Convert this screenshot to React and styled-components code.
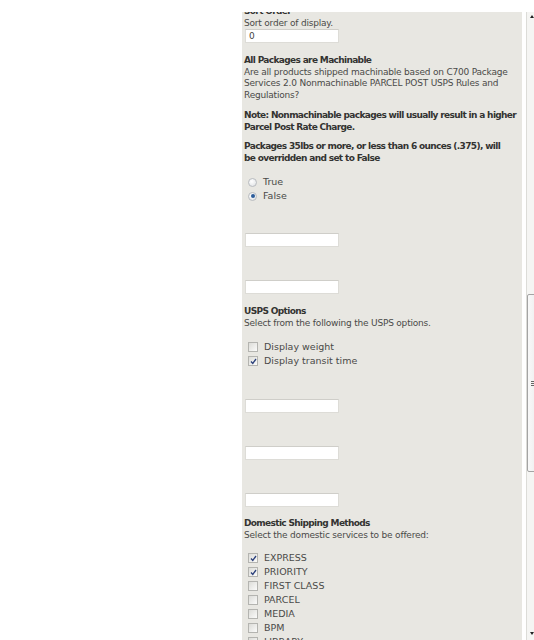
import React from 'react';
import styled, { createGlobalStyle } from 'styled-components';

const GlobalStyle = createGlobalStyle`
    html, body {
        margin: 0;
        padding: 0;
        background: #ffffff;
    }
    body {
        font-family: "DejaVu Sans", Verdana, sans-serif;
        font-size: 9px;
        color: #4a4a48;
    }
`;

const Page = styled.div`
    display: flex;
    width: 534px;
    height: 640px;
    padding-top: 12px;
    box-sizing: border-box;
    overflow: hidden;
`;

const LeftSpace = styled.div`
    width: 242px;
    flex-shrink: 0;
`;

const Panel = styled.div`
    width: 280px;
    flex-shrink: 0;
    background-color: #e8e7e2;
    overflow: hidden;
    padding-left: 2px;
    box-sizing: border-box;
`;

const Content = styled.div`
    margin-top: -6px;
    line-height: 11.5px;
`;

const Gutter = styled.div`
    width: 4px;
    flex-shrink: 0;
`;

const Scrollbar = styled.div`
    width: 17px;
    flex-shrink: 0;
    background-color: #f5f5f3;
    border-left: 1px solid #dcdcd8;
    display: flex;
    flex-direction: column;
    align-items: flex-start;
`;

const Arrow = styled.div`
    width: 0;
    height: 0;
    margin: ${p => p.$down ? 'auto 0 5px 3px' : '3px 0 0 3px'};
    border-left: 2px solid transparent;
    border-right: 2px solid transparent;
    ${p => p.$down ? 'border-top: 3px solid #222;' : 'border-bottom: 3px solid #222;'}
`;

const Thumb = styled.div`
    width: 14px;
    height: 178px;
    margin-top: ${p => p.$offset}px;
    border: 1px solid #a4a4a4;
    border-radius: 2px;
    background: linear-gradient(to right, #f8f8f8, #ebebeb);
    box-sizing: border-box;
    display: flex;
    align-items: center;
    padding-left: 3px;
`;

const Grip = styled.div`
    width: 4px;
    height: 5px;
    background: repeating-linear-gradient(to bottom, #666 0, #666 1px, transparent 1px, transparent 2px);
`;

const Title = styled.div`
    font-weight: bold;
    color: #333331;
    letter-spacing: -0.65px;
    margin-top: ${p => p.$top || 0}px;
`;

const Text = styled.div`
    letter-spacing: -0.2px;
    margin-top: ${p => p.$top || 0}px;
`;

const Input = styled.div`
    width: 94px;
    height: 14px;
    margin-top: ${p => p.$top || 0}px;
    margin-left: 1px;
    box-sizing: border-box;
    background: #ffffff;
    border: 1px solid #dddcd7;
    border-top-color: #cfcec9;
    padding: 0 3px;
    line-height: 12px;
    color: #444;
`;

const OptionList = styled.div`
    margin-top: ${p => p.$top || 0}px;
    display: flex;
    flex-direction: column;
`;

const OptionRow = styled.label`
    display: flex;
    align-items: center;
    height: 14px;
    gap: 6px;
    padding-left: 4px;
    font-size: 9.5px;
`;

const Radio = styled.span`
    width: 9px;
    height: 9px;
    border-radius: 50%;
    border: 1px solid #b9bcc0;
    background: radial-gradient(circle at 40% 35%, #ffffff, #dcdfe2);
    box-sizing: border-box;
    display: flex;
    align-items: center;
    justify-content: center;
    &::after {
        content: '';
        width: 4px;
        height: 4px;
        border-radius: 50%;
        background: ${p => p.$on ? '#2c5d9a' : 'transparent'};
    }
`;

const Box = styled.span`
    width: 10px;
    height: 10px;
    border: 1px solid #b4b4b0;
    background: linear-gradient(135deg, #dcdcd8, #fbfbfa);
    box-sizing: border-box;
    display: flex;
    align-items: center;
    justify-content: center;
`;

const Check = () => (
    <svg width="7" height="7" viewBox="0 0 7 7">
        <path d="M1 3.5 L2.8 5.5 L6 1" fill="none" stroke="#2a3f7a" strokeWidth="1.3" />
    </svg>
);

const CheckOption = ({ checked, label }) => (
    <OptionRow>
        <Box>{checked && <Check />}</Box>
        {label}
    </OptionRow>
);

const RadioOption = ({ checked, label }) => (
    <OptionRow>
        <Radio $on={checked} />
        {label}
    </OptionRow>
);

const domestic = [
    ['EXPRESS', true],
    ['PRIORITY', true],
    ['FIRST CLASS', false],
    ['PARCEL', false],
    ['MEDIA', false],
    ['BPM', false],
    ['LIBRARY', false],
];

const App = () => {
    return (
        <>
            <GlobalStyle />
            <Page>
                <LeftSpace />
                <Panel>
                    <Content>
                        <Title>Sort Order</Title>
                        <Text>Sort order of display.</Text>
                        <Input>0</Input>

                        <Title $top={12}>All Packages are Machinable</Title>
                        <Text>
                            Are all products shipped machinable based on C700 Package
                            Services 2.0 Nonmachinable PARCEL POST USPS Rules and
                            Regulations?
                        </Text>
                        <Title $top={9}>
                            Note: Nonmachinable packages will usually result in a higher
                            Parcel Post Rate Charge.
                        </Title>
                        <Title $top={8}>
                            Packages 35lbs or more, or less than 6 ounces (.375), will<br />
                            be overridden and set to False
                        </Title>
                        <OptionList $top={11}>
                            <RadioOption label="True" />
                            <RadioOption label="False" checked />
                        </OptionList>

                        <Input $top={30} />
                        <Input $top={33} />

                        <Title $top={12}>USPS Options</Title>
                        <Text>Select from the following the USPS options.</Text>
                        <OptionList $top={11}>
                            <CheckOption label="Display weight" />
                            <CheckOption label="Display transit time" checked />
                        </OptionList>

                        <Input $top={31} />
                        <Input $top={33} />
                        <Input $top={33} />

                        <Title $top={11}>Domestic Shipping Methods</Title>
                        <Text>Select the domestic services to be offered:</Text>
                        <OptionList $top={10}>
                            {domestic.map(([label, on]) => (
                                <CheckOption key={label} label={label} checked={on} />
                            ))}
                        </OptionList>
                    </Content>
                </Panel>
                <Gutter />
                <Scrollbar>
                    <Arrow />
                    <Thumb $offset={276}>
                        <Grip />
                    </Thumb>
                    <Arrow $down />
                </Scrollbar>
            </Page>
        </>
    );
};

export default App;
